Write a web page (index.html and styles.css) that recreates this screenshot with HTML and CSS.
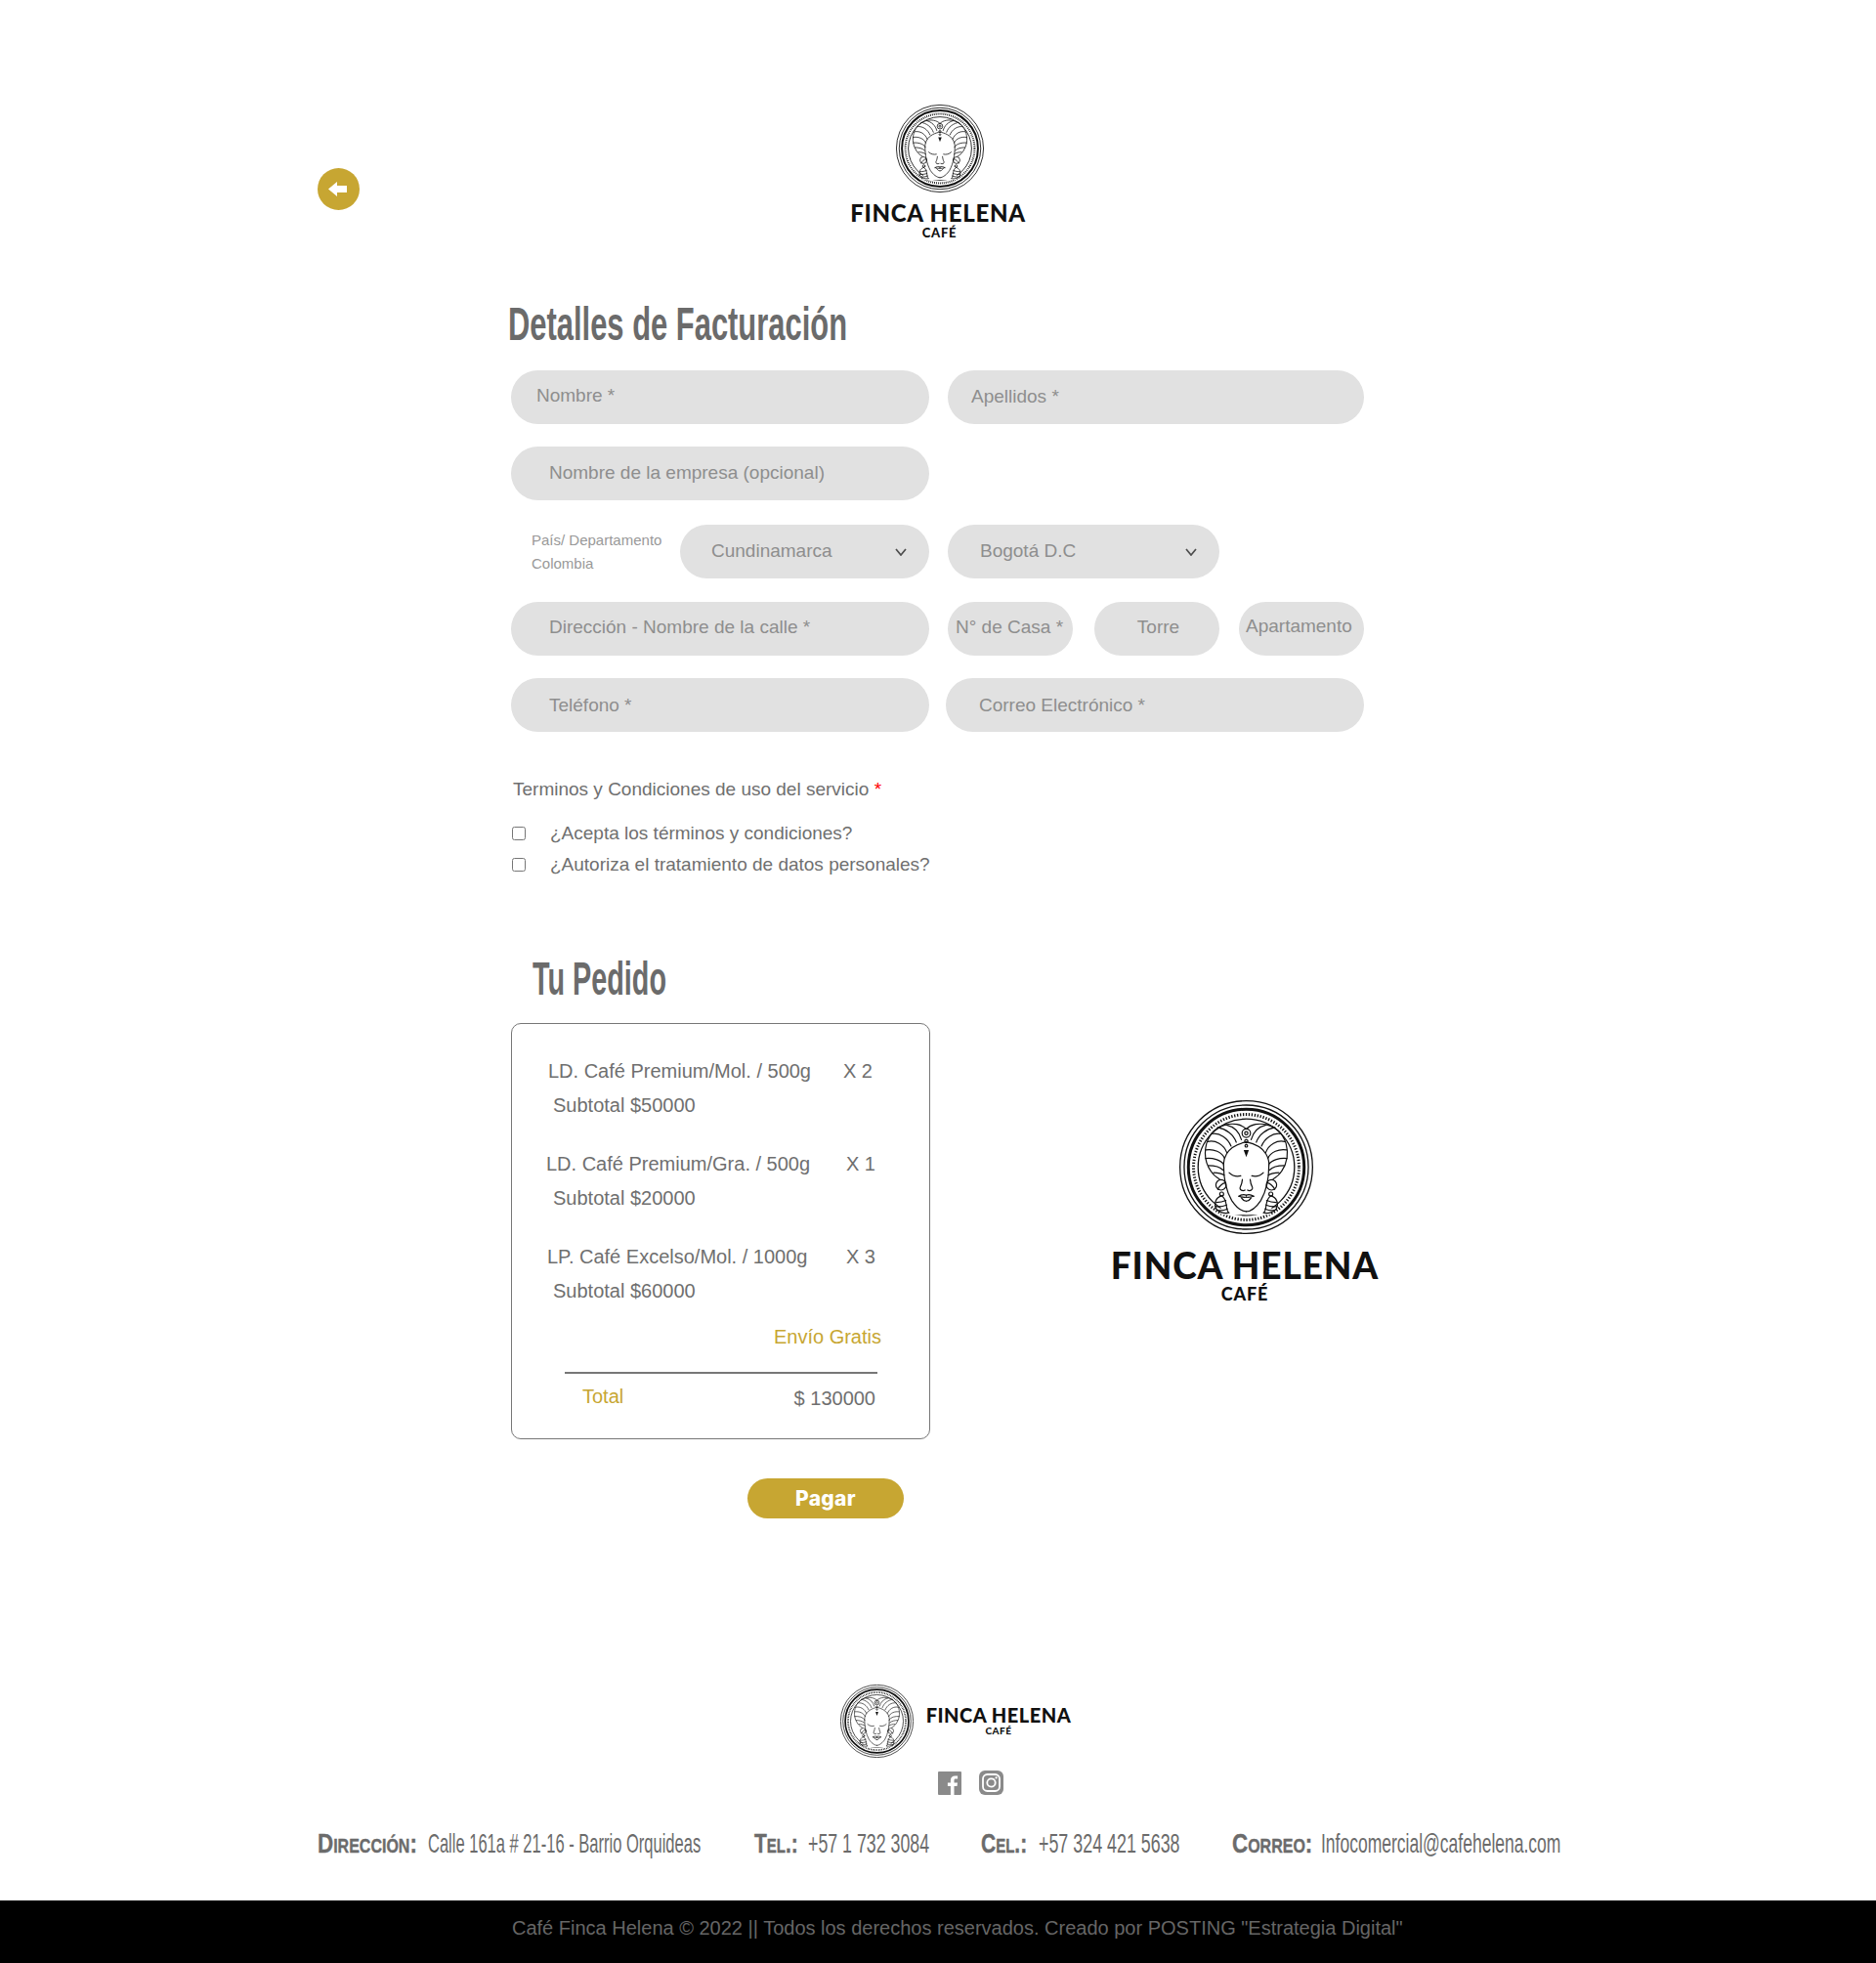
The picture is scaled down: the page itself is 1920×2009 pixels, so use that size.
FILE: index.html
```html
<!DOCTYPE html>
<html lang="es">
<head>
<meta charset="utf-8">
<title>Finca Helena Café - Pago</title>
<link rel="stylesheet" href="styles.css">
</head>
<body>
<svg class="defs" width="0" height="0" aria-hidden="true">
  <defs>
    <g id="half" fill="none" stroke="#111" stroke-width="3.6" stroke-linecap="round" stroke-linejoin="round">
      <path d="M213 95C198 80 172 76 150 82C120 88 100 110 90 140C82 170 86 200 104 226C110 236 120 244 130 250"/>
      <path d="M213 135C190 140 165 150 152 172C145 184 142 195 143 207"/>
      <path d="M143 207C143 240 150 285 168 316C180 334 198 350 213 350"/>
      <path d="M198 128C192 105 175 88 150 82"/>
      <path d="M182 136C174 112 150 94 124 90"/>
      <path d="M166 148C156 124 132 106 106 110"/>
      <path d="M153 168C144 144 118 128 94 134"/>
      <path d="M146 186C138 166 112 156 88 160"/>
      <path d="M143 204C134 190 110 184 87 186"/>
      <path d="M141 222C132 212 112 208 96 208"/>
      <path d="M145 238C136 232 122 230 112 230"/>
      <path d="M160 230C170 240 184 243 196 240"/>
      <path d="M201 251C200 262 197 270 194 276C192 284 202 288 209 284"/>
      <path d="M190 303C198 298 206 296 213 300"/>
      <path d="M190 303C198 306 206 307 213 306"/>
      <path d="M198 308C203 316 208 318 213 318"/>
      <circle cx="135" cy="268" r="16"/>
      <path d="M125 282C128 274 140 262 148 262"/>
      <circle cx="137" cy="296" r="6"/>
      <path d="M137 302C118 306 112 328 120 342C128 352 144 358 160 354C150 348 154 335 150 324C148 314 144 306 137 302Z"/>
      <path d="M120 322C130 322 142 320 150 316"/>
      <path d="M118 334C130 336 142 334 152 330"/>
      <path d="M124 346C134 348 146 346 155 342"/>
    </g>
    <g id="emblem">
      <circle cx="213" cy="213" r="205" fill="none" stroke="#111" stroke-width="4"/>
      <circle cx="213" cy="213" r="192" fill="none" stroke="#111" stroke-width="4"/>
      <circle cx="213" cy="213" r="179" fill="none" stroke="#111" stroke-width="9"/>
      <circle cx="213" cy="213" r="163" fill="none" stroke="#111" stroke-width="9" stroke-dasharray="4 5"/>
      <circle cx="213" cy="213" r="149" fill="none" stroke="#111" stroke-width="4"/>
      <path d="M82 170C86 110 130 76 213 84C296 76 340 110 344 170C346 220 320 250 296 262L290 360L136 360L130 262C106 250 80 220 82 170Z" fill="#fff"/>
      <use href="#half"/>
      <use href="#half" transform="translate(426 0) scale(-1 1)"/>
      <g fill="none" stroke="#111" stroke-width="3.6">
        <circle cx="213" cy="108" r="13"/>
        <circle cx="213" cy="108" r="5"/>
        <circle cx="213" cy="133" r="5"/>
        <circle cx="213" cy="147" r="4"/>
      </g>
      <path d="M205 160H221L213 182Z" fill="#111"/>
      <path d="M213 300V306" stroke="#111" stroke-width="2"/>
    </g>
  </defs>
</svg>

<header class="top">
  <a class="back" href="#" aria-label="Volver">
    <svg viewBox="0 0 43 43" width="43" height="43"><circle cx="21.5" cy="21.5" r="21.5" fill="#c7a632"/><path d="M11 21.5L20 14V18H30V25H20V29Z" fill="#fff"/></svg>
  </a>
  <div class="brand brand-top">
    <svg class="emblem" viewBox="6 6 414 414"><use href="#emblem"/></svg>
    <div class="wordmark">FINCA HELENA</div>
    <div class="wordcafe">CAFÉ</div>
  </div>
</header>

<main class="main">
  <h1 class="title title-billing"><span>Detalles de Facturación</span></h1>

  <div class="row row-first">
    <div class="field w428 pad-26 up">Nombre *</div>
    <div class="field w426 gap-19 pad-24">Apellidos *</div>
  </div>
  <div class="row row-empresa">
    <div class="field w428 pad-39">Nombre de la empresa (opcional)</div>
  </div>
  <div class="row row-place">
    <div class="place-label"><div>País/ Departamento</div><div>Colombia</div></div>
    <div class="field select w255 pad-32">Cundinamarca
      <svg class="chev" viewBox="0 0 12 8" width="12" height="8"><path d="M1 1L6 7L11 1" fill="none" stroke="#4d4d4d" stroke-width="1.7"/></svg>
    </div>
    <div class="field select w278 gap-19 pad-33">Bogotá D.C
      <svg class="chev" viewBox="0 0 12 8" width="12" height="8"><path d="M1 1L6 7L11 1" fill="none" stroke="#4d4d4d" stroke-width="1.7"/></svg>
    </div>
  </div>
  <div class="row row-address">
    <div class="field w428 pad-39 up">Dirección - Nombre de la calle *</div>
    <div class="field w128 gap-19 pad-8 up">N° de Casa *</div>
    <div class="field w128 gap-22 pad-3 center up">Torre</div>
    <div class="field w128 gap-20 pad-7 lift">Apartamento</div>
  </div>
  <div class="row row-contact">
    <div class="field w428 pad-39 down">Teléfono *</div>
    <div class="field w428 gap-17 pad-34 down">Correo Electrónico *</div>
  </div>

  <p class="terms">Terminos y Condiciones de uso del servicio <span class="req">*</span></p>
  <label class="check"><input type="checkbox"><span>¿Acepta los términos y condiciones?</span></label>
  <label class="check"><input type="checkbox"><span>¿Autoriza el tratamiento de datos personales?</span></label>

  <h2 class="title title-order"><span>Tu Pedido</span></h2>

  <section class="order">
    <div class="summary">
      <div class="item item-a"><span class="item-name">LD. Café Premium/Mol. / 500g</span><span class="qty qty-a">X 2</span></div>
      <div class="subtotal">Subtotal $50000</div>
      <div class="item item-b spaced"><span class="item-name">LD. Café Premium/Gra. / 500g</span><span class="qty qty-b">X 1</span></div>
      <div class="subtotal">Subtotal $20000</div>
      <div class="item item-c spaced"><span class="item-name">LP. Café Excelso/Mol. / 1000g</span><span class="qty qty-c">X 3</span></div>
      <div class="subtotal">Subtotal $60000</div>
      <div class="shipping">Envío Gratis</div>
      <hr class="rule">
      <div class="total"><span class="total-label">Total</span><span class="total-value">$ 130000</span></div>
    </div>
    <div class="brand brand-mid">
      <svg class="emblem" viewBox="6 6 414 414"><use href="#emblem"/></svg>
      <div class="wordmark">FINCA HELENA</div>
      <div class="wordcafe">CAFÉ</div>
    </div>
  </section>

  <button class="pay" type="button">Pagar</button>
</main>

<footer class="footer">
  <div class="foot-brand">
    <svg class="emblem" viewBox="6 6 414 414"><use href="#emblem"/></svg>
    <div class="foot-words">
      <div class="wordmark">FINCA HELENA</div>
      <div class="wordcafe">CAFÉ</div>
    </div>
  </div>
  <div class="social">
    <svg viewBox="0 0 24 24" width="24" height="24"><rect width="24" height="24" rx="1" fill="#8a8a8a"/><path d="M16.5 24V15H19.5L20 11.5H16.5V9.3C16.5 8.3 16.8 7.6 18.2 7.6H20.1V4.5C19.8 4.5 18.7 4.4 17.4 4.4C14.7 4.4 12.9 6 12.9 9V11.5H9.9V15H12.9V24Z" fill="#fff"/></svg>
    <svg viewBox="0 0 25 25" width="25" height="25"><rect width="25" height="25" rx="6" fill="#8a8a8a"/><rect x="4" y="4" width="17" height="17" rx="4.5" fill="none" stroke="#fff" stroke-width="1.8"/><circle cx="12.5" cy="12.5" r="4.2" fill="none" stroke="#fff" stroke-width="1.8"/><circle cx="17.6" cy="7.4" r="1.1" fill="#fff"/></svg>
  </div>
  <div class="info">
    <div class="info-label il-dir"><span>Dirección:</span></div>
    <div class="info-value iv-dir"><span>Calle 161a # 21-16 - Barrio Orquideas</span></div>
    <div class="info-label il-tel"><span>Tel.:</span></div>
    <div class="info-value iv-tel"><span>+57 1 732 3084</span></div>
    <div class="info-label il-cel"><span>Cel.:</span></div>
    <div class="info-value iv-cel"><span>+57 324 421 5638</span></div>
    <div class="info-label il-mail"><span>Correo:</span></div>
    <div class="info-value iv-mail"><span>Infocomercial@cafehelena.com</span></div>
  </div>
  <div class="copy">Café Finca Helena © 2022 || Todos los derechos reservados. Creado por POSTING "Estrategia Digital"</div>
</footer>
</body>
</html>
```

FILE: styles.css
```css
* { box-sizing: border-box; }
html, body { margin: 0; padding: 0; background: #fff; }
body { font-family: "Liberation Sans", Arial, sans-serif; font-size: 20px; color: #6f6f6f; width: 1920px; height: 2009px; overflow-x: hidden; }
.defs { position: absolute; }

/* header */
.top { display: flex; height: 300px; padding: 107px 0 0 325px; }
.back { display: block; width: 43px; height: 43px; margin-top: 65px; }
.back svg { display: block; }

/* brand */
.brand { display: flex; flex-direction: column; align-items: center; }
.emblem { display: block; flex: none; }
.wordmark, .wordcafe { font-family: Lato, "Liberation Sans", sans-serif; font-weight: 900; color: #111; white-space: nowrap; }
.brand-top { width: 180px; margin-left: 502px; }
.brand-top .emblem { width: 90px; height: 90px; margin-left: 3px; }
.brand-top .wordmark { font-size: 24px; line-height: 18px; margin-top: 12px; letter-spacing: .7px; }
.brand-top .wordcafe { font-size: 13px; line-height: 10px; margin: 6px 0 0 3px; letter-spacing: .7px; }
.brand-mid { width: 274px; margin: 79px 0 0 185px; }
.brand-mid .emblem { width: 137px; height: 137px; margin-left: 2px; }
.brand-mid .wordmark { font-size: 37px; line-height: 28px; margin-top: 18px; letter-spacing: .9px; }
.brand-mid .wordcafe { font-size: 18px; line-height: 14px; margin-top: 8px; letter-spacing: .9px; }

/* titles */
.main { padding-left: 523px; }
.title { margin: 0; height: 50px; font-family: "Liberation Sans Narrow", "Liberation Sans", sans-serif; font-weight: 700; font-size: 48px; color: #6b6b6b; white-space: nowrap; }
.title span { display: inline-block; transform-origin: left center; }
.title-billing { margin: 6px 0 0 -3px; line-height: 52px; }
.title-billing span { transform: scaleX(.644); }
.title-order { margin: 74px 0 0 22px; line-height: 54px; }
.title-order span { transform: scaleX(.6); }

/* fields */
.row { display: flex; }
.row-first { margin-top: 23px; }
.row-empresa { margin-top: 23px; }
.row-place { margin-top: 25px; align-items: flex-start; }
.row-address { margin-top: 24px; }
.row-contact { margin-top: 23px; }
.field { position: relative; flex: none; height: 55px; line-height: 54px; background: #e1e1e1; border-radius: 27.5px; color: #8e8e8e; font-size: 19px; white-space: nowrap; }
.w428 { width: 428px; } .w426 { width: 426px; } .w255 { width: 255px; } .w278 { width: 278px; } .w128 { width: 128px; }
.gap-17 { margin-left: 17px; } .gap-19 { margin-left: 19px; } .gap-20 { margin-left: 20px; } .gap-22 { margin-left: 22px; }
.pad-3 { padding-left: 3px; } .pad-7 { padding-left: 7px; } .pad-8 { padding-left: 8px; } .pad-24 { padding-left: 24px; } .pad-26 { padding-left: 26px; } .pad-32 { padding-left: 32px; } .pad-33 { padding-left: 33px; } .pad-34 { padding-left: 34px; } .pad-39 { padding-left: 39px; }
.center { text-align: center; }
.up { line-height: 52px; }
.down { line-height: 56px; }
.lift { line-height: 50px; }
.place-label { width: 173px; padding: 4px 0 0 21px; font-size: 15px; line-height: 24px; color: #999; white-space: nowrap; }
.chev { position: absolute; right: 23px; top: 24px; }

/* terms */
.terms { margin: 46px 0 0 2px; line-height: 25px; height: 24px; font-size: 19px; color: #6f6f6f; }
.req { color: #f00; }
.check { display: flex; align-items: center; height: 32px; font-size: 19px; color: #6f6f6f; }
.terms + .check { margin-top: 18px; }
.check input { width: 14px; height: 14px; margin: 0 25px 0 1px; flex: none; accent-color: #777; }

/* order */
.order { display: flex; margin-top: 22px; align-items: flex-start; }
.summary { width: 429px; height: 426px; border: 1px solid #777; border-radius: 10px; padding-top: 31px; flex: none; }
.item { display: flex; height: 35px; line-height: 35px; white-space: nowrap; }
.item-a { padding-left: 37px; } .item-b { padding-left: 35px; } .item-c { padding-left: 36px; }
.item .qty { margin-left: auto; }
.qty-a { padding-right: 58px; } .qty-b { padding-right: 55px; } .qty-c { padding-right: 55px; }
.spaced { margin-top: 25px; }
.subtotal { height: 35px; line-height: 35px; padding-left: 42px; }
.shipping { margin-top: 12px; height: 35px; line-height: 35px; padding-right: 49px; text-align: right; color: #c7a632; }
.rule { margin: 18px 0 0 54px; width: 320px; height: 2px; border: 0; background: #777; }
.total { display: flex; justify-content: space-between; margin-top: 6px; padding: 0 55px 0 72px; line-height: 35px; }
.total-label { color: #c7a632; }
.total-value { padding-top: 2px; }

.pay { display: block; width: 160px; height: 41px; margin: 40px 0 0 242px; padding: 0; border: 0; border-radius: 20.5px; background: #c7a632; color: #fff; font-family: Inter, "Liberation Sans", sans-serif; font-weight: 800; font-size: 21px; letter-spacing: .3px; }

/* footer */
.footer { margin-top: 170px; }
.foot-brand { display: flex; padding-left: 860px; height: 75px; }
.foot-brand .emblem { width: 75px; height: 75px; }
.foot-words { margin: 23px 0 0 11px; width: 152px; text-align: center; }
.foot-words .wordmark { font-size: 20px; line-height: 16px; letter-spacing: .5px; }
.foot-words .wordcafe { font-size: 10px; line-height: 8px; margin-top: 4px; letter-spacing: .5px; }
.social { display: flex; align-items: center; gap: 18px; margin-top: 13px; padding-left: 960px; height: 25px; }
.social svg { display: block; }
.info { display: flex; margin-top: 30px; padding-left: 325px; height: 40px; line-height: 40px; font-family: "Liberation Sans Narrow", "Liberation Sans", sans-serif; font-size: 28px; color: #6b6b6b; white-space: nowrap; }
.info span { display: inline-block; transform-origin: left center; }
.info-label { font-weight: 700; font-variant: small-caps; -webkit-text-stroke: .4px #6b6b6b; }
.info-value { font-weight: 400; }
.il-dir { width: 113px; } .iv-dir { width: 334px; }
.il-tel { width: 55px; } .iv-tel { width: 177px; }
.il-cel { width: 59px; } .iv-cel { width: 198px; }
.il-mail { width: 91px; } .iv-mail { width: 243px; }
.info-label span { transform: scaleX(.8); }
.il-tel span, .il-cel span { transform: scaleX(.75); }
.iv-dir span { transform: scaleX(.59); }
.iv-tel span { transform: scaleX(.635); }
.iv-cel span { transform: scaleX(.638); }
.iv-mail span { transform: scaleX(.625); }
.copy { margin-top: 38px; height: 64px; padding: 0 0 8px 524px; line-height: 56px; background: #000; color: #666; font-size: 20px; white-space: nowrap; }
```
